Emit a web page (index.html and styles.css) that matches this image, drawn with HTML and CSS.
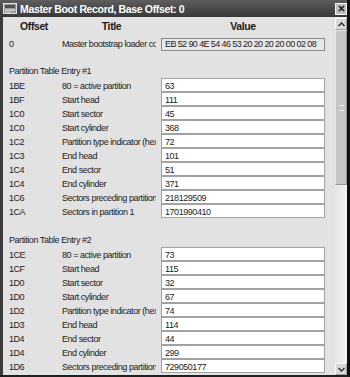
FILE: index.html
```html
<!DOCTYPE html>
<html lang="en">
<head>
    <meta charset="UTF-8">
    <title>Master Boot Record, Base Offset: 0</title>
    <link rel="stylesheet" href="styles.css">
</head>
<body>
    <div class="window">
        <div class="titlebar">
            <svg class="app-icon" width="14" height="11" viewBox="0 0 14 11">
                <rect x="0.5" y="0.5" width="13" height="10" fill="#9a9a9a" stroke="#e0e0e0"/>
                <rect x="2" y="2" width="10" height="3" fill="#505050"/>
                <line x1="2" y1="7" x2="12" y2="7" stroke="#f0f0f0"/>
                <line x1="2" y1="9" x2="8" y2="9" stroke="#d0d0d0"/>
            </svg>
            <span class="title-text">Master Boot Record, Base Offset: 0</span>
            <button class="close-btn" title="Close">
                <svg width="7" height="7" viewBox="0 0 7 7">
                    <path d="M1 1 L6 6 M6 1 L1 6" stroke="#1e1e1e" stroke-width="1.6"/>
                </svg>
            </button>
        </div>
        <div class="body">
            <div class="content">
                <div class="grid head-row">
                    <div>Offset</div>
                    <div>Title</div>
                    <div>Value</div>
                </div>
                <div class="grid row first">
                    <div class="off">0</div>
                    <div class="ttl">Master bootstrap loader code</div>
                    <div class="field ro">EB 52 90 4E 54 46 53 20 20 20 20 00 02 08</div>
                </div>

                <div class="section">
                    <div class="section-title">Partition Table Entry #1</div>
                    <div class="grid row"><div class="off">1BE</div><div class="ttl">80 = active partition</div><div class="field">63</div></div>
                    <div class="grid row"><div class="off">1BF</div><div class="ttl">Start head</div><div class="field">111</div></div>
                    <div class="grid row"><div class="off">1C0</div><div class="ttl">Start sector</div><div class="field">45</div></div>
                    <div class="grid row"><div class="off">1C0</div><div class="ttl">Start cylinder</div><div class="field">368</div></div>
                    <div class="grid row"><div class="off">1C2</div><div class="ttl">Partition type indicator (hex)</div><div class="field">72</div></div>
                    <div class="grid row"><div class="off">1C3</div><div class="ttl">End head</div><div class="field">101</div></div>
                    <div class="grid row"><div class="off">1C4</div><div class="ttl">End sector</div><div class="field">51</div></div>
                    <div class="grid row"><div class="off">1C4</div><div class="ttl">End cylinder</div><div class="field">371</div></div>
                    <div class="grid row"><div class="off">1C6</div><div class="ttl">Sectors preceding partition</div><div class="field">218129509</div></div>
                    <div class="grid row"><div class="off">1CA</div><div class="ttl">Sectors in partition 1</div><div class="field">1701990410</div></div>
                </div>

                <div class="section second">
                    <div class="section-title">Partition Table Entry #2</div>
                    <div class="grid row"><div class="off">1CE</div><div class="ttl">80 = active partition</div><div class="field">73</div></div>
                    <div class="grid row"><div class="off">1CF</div><div class="ttl">Start head</div><div class="field">115</div></div>
                    <div class="grid row"><div class="off">1D0</div><div class="ttl">Start sector</div><div class="field">32</div></div>
                    <div class="grid row"><div class="off">1D0</div><div class="ttl">Start cylinder</div><div class="field">67</div></div>
                    <div class="grid row"><div class="off">1D2</div><div class="ttl">Partition type indicator (hex)</div><div class="field">74</div></div>
                    <div class="grid row"><div class="off">1D3</div><div class="ttl">End head</div><div class="field">114</div></div>
                    <div class="grid row"><div class="off">1D4</div><div class="ttl">End sector</div><div class="field">44</div></div>
                    <div class="grid row"><div class="off">1D4</div><div class="ttl">End cylinder</div><div class="field">299</div></div>
                    <div class="grid row"><div class="off">1D6</div><div class="ttl">Sectors preceding partition</div><div class="field">729050177</div></div>
                </div>
            </div>
            <div class="scrollbar">
                <div class="sb-btn">
                    <svg width="7" height="5" viewBox="0 0 7 5"><path d="M0.5 4 L3.5 1 L6.5 4" fill="none" stroke="#333" stroke-width="1.5"/></svg>
                </div>
                <div class="sb-thumb"><span class="grip"></span></div>
                <div class="sb-track"></div>
                <div class="sb-btn">
                    <svg width="7" height="5" viewBox="0 0 7 5"><path d="M0.5 1 L3.5 4 L6.5 1" fill="none" stroke="#333" stroke-width="1.5"/></svg>
                </div>
            </div>
        </div>
    </div>
</body>
</html>
```

FILE: styles.css
```css
html, body { margin: 0; padding: 0; }
body { width: 350px; height: 377px; overflow: hidden; background: #1a1a1a; font-family: "Liberation Sans", Arial, sans-serif; }

.window {
    width: 350px;
    height: 377px;
    display: flex;
    flex-direction: column;
    background: #3a3a3a;
    box-sizing: border-box;
    border-right: 3px solid #101010;
    border-bottom: 2px solid #202020;
}

.titlebar {
    height: 17px;
    display: flex;
    align-items: center;
    padding-left: 3px;
    background: linear-gradient(#5e5e5e, #464646 60%, #3a3a3a);
    color: #fff;
    flex-shrink: 0;
}
.app-icon { margin-right: 3px; }
.title-text { font-size: 10.5px; font-weight: bold; letter-spacing: -0.35px; flex: 1; }
.close-btn {
    width: 12px;
    height: 12px;
    margin-right: 0;
    padding: 0;
    border: 1px solid #f4f4f4;
    background: #bdbdbd;
    display: flex;
    align-items: center;
    justify-content: center;
}

.body { flex: 1; display: flex; padding-left: 3px; min-height: 0; }

.content {
    flex: 1;
    background: #e2e2e2;
    color: #1c1c1c;
    font-size: 9px;
    letter-spacing: -0.45px;
    padding: 2px 0 0 6px;
    overflow: hidden;
}

.grid { display: grid; grid-template-columns: 53px 99px 164px; }

.head-row { height: 15px; line-height: 15px; font-size: 10.5px; font-weight: bold; letter-spacing: -0.4px; text-align: center; margin-bottom: 4px; }
.head-row div:first-child { padding-right: 3px; }

.row { height: 14px; }
.off, .ttl { padding-top: 3px; line-height: 11px; }
.ttl { white-space: nowrap; overflow: hidden; margin-right: 5px; }

.field {
    box-sizing: border-box;
    height: 14px;
    border: 1px solid #a2a2a2;
    background: #fff;
    padding: 2px 3px 0;
    line-height: 11px;
    white-space: nowrap;
}

.first { height: 13px; }
.first .off, .first .ttl { padding-top: 1px; }
.field.ro { height: 13px; padding-top: 0; background: #e8e8e8; border-color: #8a8a8a; letter-spacing: -0.6px; }

.section { margin-top: 14px; }
.section.second { margin-top: 16px; }
.section-title { height: 12px; line-height: 12px; margin-bottom: 1px; }

.scrollbar {
    width: 12px;
    display: flex;
    flex-direction: column;
    background: #eeeeee;
    padding-top: 1px;
}
.sb-btn {
    height: 12px;
    box-sizing: border-box;
    border: 1px solid #f8f8f8;
    border-right-color: #a0a0a0;
    border-bottom-color: #a0a0a0;
    background: #d8d8d8;
    display: flex;
    align-items: center;
    justify-content: center;
    flex-shrink: 0;
}
.sb-thumb {
    height: 155px;
    box-sizing: border-box;
    border: 1px solid #e6e6e6;
    border-right-color: #999;
    border-bottom-color: #999;
    background: #c6c6c6;
    display: flex;
    align-items: center;
    justify-content: center;
    flex-shrink: 0;
}
.grip { width: 5px; height: 4px; border-top: 1px solid #f2f2f2; border-bottom: 1px solid #f2f2f2; }
.sb-track { flex: 1; background: linear-gradient(90deg, #e4e4e4, #f4f4f4); }
```
